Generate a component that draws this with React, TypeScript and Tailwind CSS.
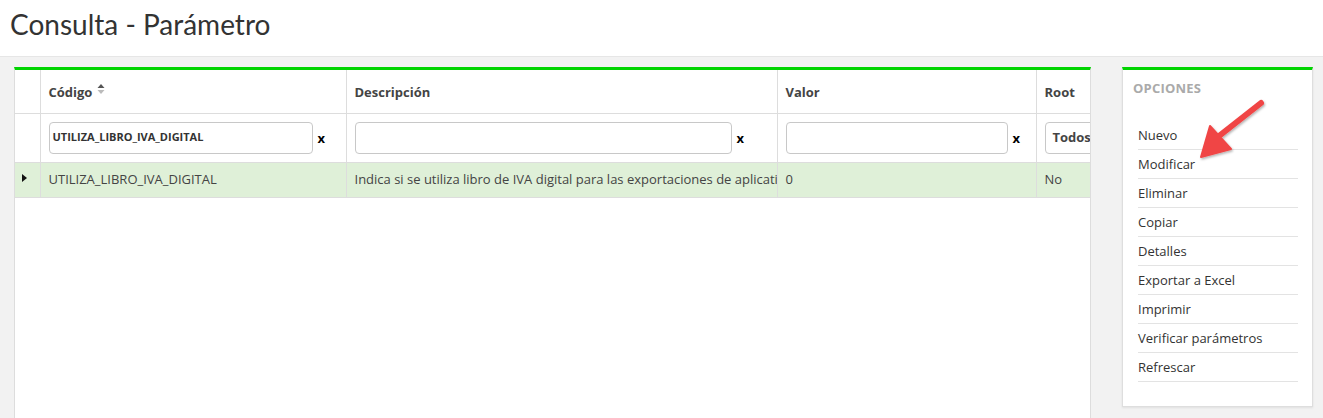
import type { ReactNode } from "react";

const opciones = [
  "Nuevo",
  "Modificar",
  "Eliminar",
  "Copiar",
  "Detalles",
  "Exportar a Excel",
  "Imprimir",
  "Verificar parámetros",
  "Refrescar",
];

function SortIcon() {
  return (
    <svg width="8" height="12" viewBox="0 0 8 12" className="ml-[5px] inline-block align-[2px]">
      <path d="M0.5 5 L4 1 L7.5 5 Z" fill="#555" />
      <path d="M0.5 7 L4 11 L7.5 7 Z" fill="#bbb" />
    </svg>
  );
}

function FilterInput({ value, width }: { value?: string; width: string }) {
  return (
    <div className="flex items-center">
      <div
        className={`flex h-[32px] items-center rounded-[4px] border border-[#c8c8c8] bg-white px-[3px] text-[11px] font-bold text-[#333] ${width}`}
      >
        {value}
      </div>
      <span className="ml-[5px] mt-[3px] text-[13px] font-bold text-black">x</span>
    </div>
  );
}

function Th({ children, className = "" }: { children?: ReactNode; className?: string }) {
  return (
    <th className={`border-r border-[#dddddd] px-[8px] pt-[3px] text-left align-middle text-[13px] font-bold text-[#444] ${className}`}>
      {children}
    </th>
  );
}

export default function App() {
  return (
    <div className="flex h-[418px] w-[1323px] flex-col overflow-hidden bg-[#f2f2f2] font-['Open_Sans',sans-serif]">
      <header className="h-[57px] shrink-0 border-b border-[#e6e6e6] bg-white px-[10px] pt-[4px]">
        <h1 className="font-['Lato',sans-serif] text-[28px] leading-[40px] text-[#333]">
          Consulta - Parámetro
        </h1>
      </header>

      <div className="flex flex-1 items-start gap-[31px] pl-[14px] pt-[10px]">
        <section className="h-[360px] w-[1077px] shrink-0 overflow-hidden border-x border-[#dddddd] border-t-[3px] border-t-[#00d400] bg-white">
          <table className="w-[1200px] table-fixed border-collapse">
            <colgroup>
              <col className="w-[25px]" />
              <col className="w-[306px]" />
              <col className="w-[431px]" />
              <col className="w-[259px]" />
              <col className="w-[179px]" />
            </colgroup>
            <thead>
              <tr className="h-[43px] border-b border-[#dddddd]">
                <Th />
                <Th>
                  Código
                  <SortIcon />
                </Th>
                <Th>Descripción</Th>
                <Th>Valor</Th>
                <Th>Root</Th>
              </tr>
            </thead>
            <tbody>
              <tr className="h-[49px] border-b border-[#dddddd]">
                <td className="border-r border-[#dddddd]" />
                <td className="border-r border-[#dddddd] px-[8px]">
                  <FilterInput value="UTILIZA_LIBRO_IVA_DIGITAL" width="w-[264px]" />
                </td>
                <td className="border-r border-[#dddddd] px-[8px]">
                  <FilterInput width="w-[377px]" />
                </td>
                <td className="border-r border-[#dddddd] px-[8px]">
                  <FilterInput width="w-[222px]" />
                </td>
                <td className="px-[8px]">
                  <div className="flex h-[32px] w-[120px] items-center rounded-[4px] border border-[#c8c8c8] px-[7px] text-[13px] font-bold text-[#444]">
                    Todos
                  </div>
                </td>
              </tr>
              <tr className="h-[35px] border-b border-[#dddddd] bg-[#dff0d8] text-[13px] text-[#444]">
                <td className="border-r border-[#dddddd] pl-[7px]">
                  <svg width="5" height="8" viewBox="0 0 5 8" className="-mt-[4px]">
                    <path d="M0 0 L5 4 L0 8 Z" fill="#111" />
                  </svg>
                </td>
                <td className="border-r border-[#dddddd] px-[8px] pt-[1px]">UTILIZA_LIBRO_IVA_DIGITAL</td>
                <td className="border-r border-[#dddddd] pl-[8px] pt-[1px]">
                  <div className="w-[422px] overflow-hidden whitespace-nowrap">
                    Indica si se utiliza libro de IVA digital para las exportaciones de aplicati
                  </div>
                </td>
                <td className="border-r border-[#dddddd] px-[8px] pt-[1px]">0</td>
                <td className="px-[8px] pt-[1px]">No</td>
              </tr>
            </tbody>
          </table>
        </section>

        <aside className="relative w-[191px] shrink-0 border border-t-[3px] border-[#dedede] border-t-[#00d400] bg-white pb-[24px] pl-[10px] pr-[14px] shadow-[0_1px_2px_rgba(0,0,0,0.08)]">
          <h2 className="pt-[9px] text-[13px] font-bold uppercase tracking-[0.2px] text-[#aaaaaa]">
            Opciones
          </h2>
          <ul className="mt-[22px] pl-[5px]">
            {opciones.map((o) => (
              <li
                key={o}
                className="flex h-[29px] items-center border-b border-[#e3e3e3] pt-[2px] text-[13px] text-[#333]"
              >
                {o}
              </li>
            ))}
          </ul>

          <svg
            width="80"
            height="70"
            viewBox="0 0 80 70"
            className="pointer-events-none absolute left-[68px] top-[24px]"
          >
            <defs>
              <filter id="sh" x="-20%" y="-20%" width="140%" height="140%">
                <feDropShadow dx="1" dy="1.5" stdDeviation="1.2" floodColor="#000" floodOpacity="0.3" />
              </filter>
            </defs>
            <g filter="url(#sh)">
              <line x1="70" y1="9" x2="28" y2="42" stroke="#f04545" strokeWidth="6" strokeLinecap="round" />
              <path d="M10 63 L19 32 L40 55 Z" fill="#f04545" stroke="#f04545" strokeWidth="2" strokeLinejoin="round" />
            </g>
          </svg>
        </aside>
      </div>
    </div>
  );
}
